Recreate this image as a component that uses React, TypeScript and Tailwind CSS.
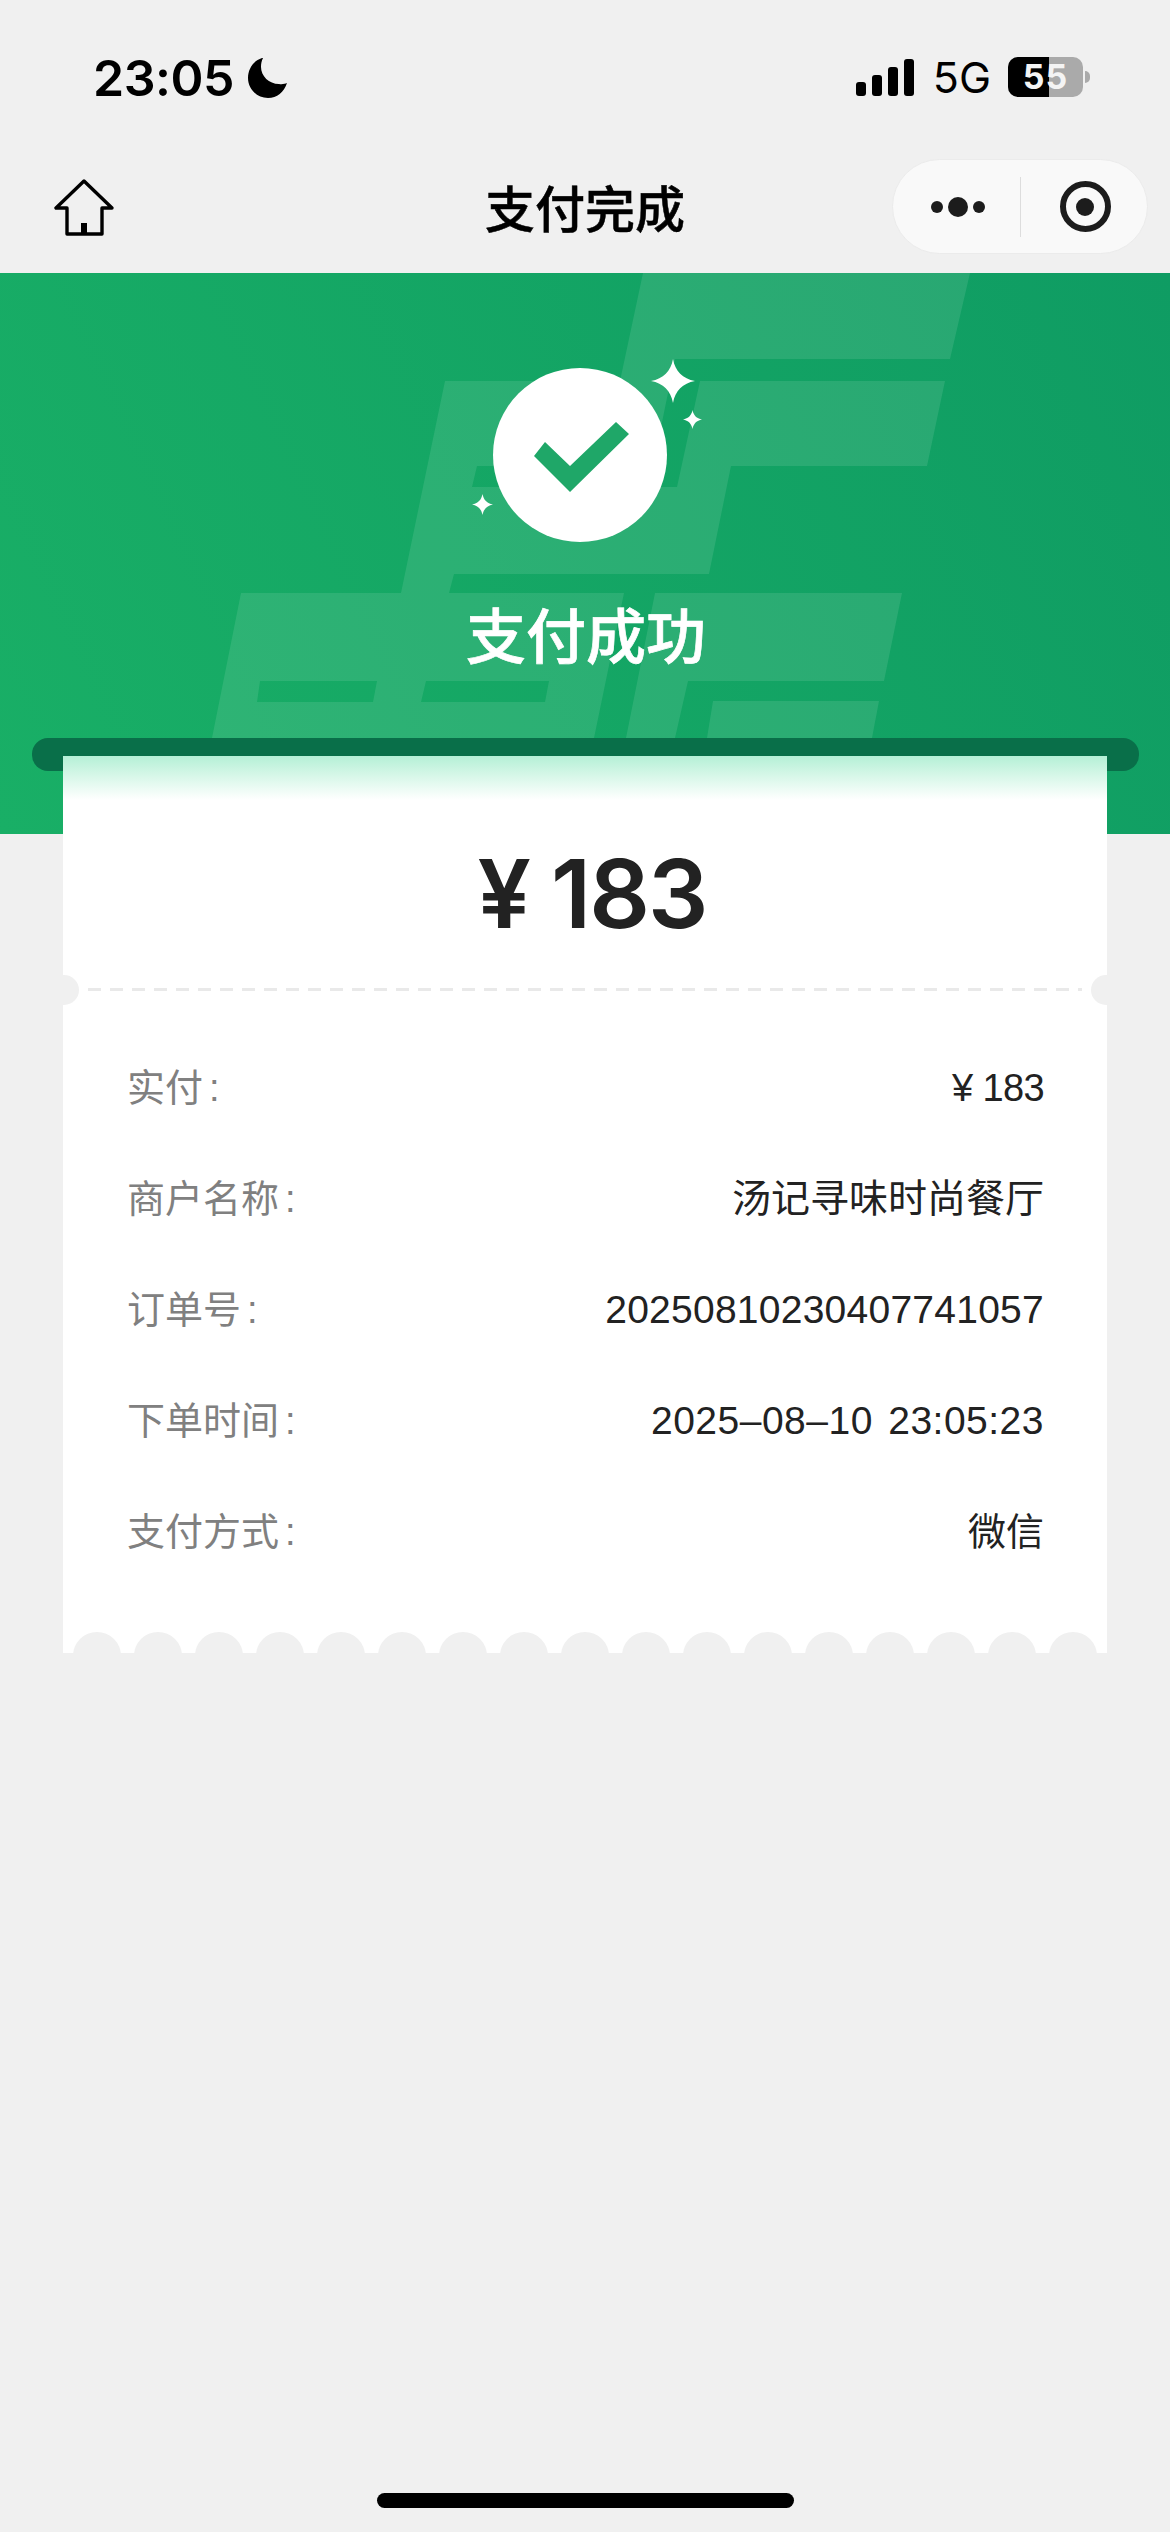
const ROWS = [
  { label: '实付', value: '¥ 183', valueClass: 'tracking-[-0.6px]' },
  { label: '商户名称', value: '汤记寻味时尚餐厅', valueClass: 'text-[39px]' },
  { label: '订单号', value: '20250810230407741057', valueClass: 'text-[39px] tracking-[0.25px]' },
  { label: '下单时间', value: '2025–08–10 23:05:23', valueClass: 'text-[39px] tracking-[0.5px] [word-spacing:4px]' },
  { label: '支付方式', value: '微信', valueClass: '' },
]

const SCALLOPS = Array.from({ length: 17 }, (_, i) => i)

function Sparkle({ className }: { className: string }) {
  return (
    <svg viewBox="0 0 100 100" className={className} fill="#fff">
      <path d="M50 0C55 28 72 45 100 50C72 55 55 72 50 100C45 72 28 55 0 50C28 45 45 28 50 0Z" />
    </svg>
  )
}

function StatusBar() {
  return (
    <div className="flex h-[154px] items-start justify-between pl-[93px] pr-[80px] pt-[57px] text-black">
      <div className="flex items-center gap-[14px]">
        <span className="font-['Inter',sans-serif] text-[50px] font-semibold leading-[42px] tracking-[-0.5px]">23:05</span>
        <svg viewBox="0 0 40 40" className="h-[40px] w-[40px]" fill="#000">
          <path d="M14 0C5 3 0 11 0 20C0 31 9 40 20 40C29 40 36 34 39 25C37 26 34 26.5 31 26C21 26 13 18 13 9C13 6 13.5 3 15 0Z" />
        </svg>
      </div>
      <div className="flex items-center">
        <div className="flex h-[37px] items-end gap-[6px] pt-[2px]">
          <div className="h-[14px] w-[10px] rounded-[3px] bg-black" />
          <div className="h-[21px] w-[10px] rounded-[3px] bg-black" />
          <div className="h-[29px] w-[10px] rounded-[3px] bg-black" />
          <div className="h-[37px] w-[10px] rounded-[3px] bg-black" />
        </div>
        <span className="ml-[19px] font-['Inter',sans-serif] text-[43px] font-normal leading-[40px]">5G</span>
        <div className="relative ml-[17px] flex h-[40px] w-[75px] items-center justify-center overflow-hidden rounded-[10px] bg-[#aaaaaa]">
          <div className="absolute inset-y-0 left-0 w-[41px] bg-black" />
          <span className="relative font-['Inter',sans-serif] text-[34px] font-bold leading-[40px] tracking-[1px] text-[#f4f4f4]">55</span>
        </div>
        <div className="ml-[2px] h-[12px] w-[5px] rounded-r-[5px] bg-[#aaaaaa]" />
      </div>
    </div>
  )
}

function NavBar() {
  return (
    <div className="grid h-[119px] grid-cols-[1fr_auto_1fr] items-start px-[22px] pt-[5px]">
      <svg viewBox="0 0 60 58" className="ml-[32px] mt-[20px] h-[58px] w-[60px]" fill="none" stroke="#000" strokeWidth="3.4" strokeLinejoin="round">
        <path d="M30 2L2 29H13V55H48V29H58Z" />
        <path d="M27 44H33V55H27Z" fill="#000" stroke="none" />
      </svg>
      <h1 className="mt-[19px] font-['Noto_Sans_CJK_SC',sans-serif] text-[50px] font-medium leading-[56px] text-black [-webkit-text-stroke:0.5px_#000]">支付完成</h1>
      <div className="flex h-[95px] w-[256px] items-center justify-self-end rounded-[48px] border border-[#ebebeb] bg-[#f9f9f9]">
        <div className="flex w-[127px] items-center justify-center gap-[5px] pl-[3px]">
          <div className="h-[12px] w-[12px] rounded-full bg-[#1c1c1c]" />
          <div className="h-[20px] w-[20px] rounded-full bg-[#1c1c1c]" />
          <div className="h-[12px] w-[12px] rounded-full bg-[#1c1c1c]" />
        </div>
        <div className="h-[60px] w-px bg-[#dddddd]" />
        <div className="flex flex-1 items-center justify-center pl-[2px]">
          <div className="flex h-[51px] w-[51px] items-center justify-center rounded-full border-[6px] border-[#1c1c1c]">
            <div className="h-[18px] w-[18px] rounded-full bg-[#1c1c1c]" />
          </div>
        </div>
      </div>
    </div>
  )
}

function Watermark() {
  return (
    <svg viewBox="0 273 1170 561" className="absolute inset-0 h-full w-full" fill="#fff" fillOpacity="0.1">
      <path
        fillRule="evenodd"
        d="M643 273L970 273L950 359L675 359L653 466L477 466L472 487L677 487L700 381L945 381L927 466L731 466L709 574L454 574L449 593L624 593L594 738L212 738L241 593L401 593L445 381L620 381ZM260 681L377 681L373 702L257 702ZM426 681L549 681L545 702L421 702Z"
      />
      <path d="M655 593L902 593L884 681L688 681L675 738L626 738Z" />
      <path d="M713 701L879 701L872 738L707 738Z" />
    </svg>
  )
}

function Hero() {
  return (
    <div className="relative h-[561px] overflow-hidden bg-[linear-gradient(65deg,#19af66,#0f9c63)]">
      <Watermark />
      <div className="relative flex flex-col items-center pt-[95px]">
        <div className="relative mr-[10px] flex h-[174px] w-[174px] items-center justify-center rounded-full bg-white">
          <svg viewBox="0 0 174 174" className="h-[174px] w-[174px]" fill="#1fa768">
            <path d="M52 74L77 98L123 54L136 66L77 124L41 88Z" />
          </svg>
          <Sparkle className="absolute left-[158px] top-[-9px] h-[44px] w-[44px]" />
          <Sparkle className="absolute left-[190px] top-[42px] h-[19px] w-[19px]" />
          <Sparkle className="absolute left-[-21px] top-[126px] h-[21px] w-[21px]" />
        </div>
        <h2 className="ml-[2px] mt-[55px] font-['Noto_Sans_CJK_SC',sans-serif] text-[60px] font-medium leading-[72px] text-white [-webkit-text-stroke:0.7px_#fff]">支付成功</h2>
      </div>
      <div className="absolute left-[32px] right-[31px] top-[465px] h-[33px] rounded-[16px] bg-[#096f49]" />
    </div>
  )
}

function Receipt() {
  return (
    <div className="relative mx-[63px] -mt-[78px] h-[897px] w-[1044px] overflow-hidden bg-white">
      <div className="absolute inset-x-0 top-0 h-[44px] bg-gradient-to-b from-[#b4f0d6] to-white" />
      <div className="relative flex h-[232px] items-start justify-center pl-[14px] pt-[83px]">
        <span className="font-['Inter',sans-serif] text-[95px] font-semibold leading-[110px] tracking-[-2px] text-[#222222]">¥ 183</span>
      </div>
      <div className="relative h-[3px]">
        <div className="mx-[25px] h-[3px] bg-[repeating-linear-gradient(to_right,#e9e9e9_0,#e9e9e9_13px,transparent_13px,transparent_22px)]" />
        <div className="absolute left-[-14px] top-[-13px] h-[30px] w-[30px] rounded-full bg-[#f0f0f0]" />
        <div className="absolute right-[-14px] top-[-13px] h-[30px] w-[30px] rounded-full bg-[#f0f0f0]" />
      </div>
      <div className="flex flex-col pl-[64px] pr-[63px] pt-[42px] font-['Liberation_Sans','Noto_Sans_CJK_SC',sans-serif] text-[38px]">
        {ROWS.map(row => (
          <div key={row.label} className="flex h-[111px] items-center justify-between">
            <span className="text-[#808080]">
              {row.label}
              <span className="ml-[6px]">:</span>
            </span>
            <span className={`text-[#222222] ${row.valueClass}`}>{row.value}</span>
          </div>
        ))}
      </div>
      <div className="absolute inset-x-0 bottom-0 flex h-[21px] justify-between overflow-hidden px-[10px]">
        {SCALLOPS.map(i => (
          <div key={i} className="h-[48px] w-[48px] shrink-0 rounded-full bg-[#f0f0f0]" />
        ))}
      </div>
    </div>
  )
}

export default function App() {
  return (
    <div className="relative min-h-[2532px] bg-[#f0f0f0]">
      <StatusBar />
      <NavBar />
      <Hero />
      <Receipt />
      <div className="absolute bottom-[24px] left-[377px] h-[15px] w-[417px] rounded-[8px] bg-black" />
    </div>
  )
}
